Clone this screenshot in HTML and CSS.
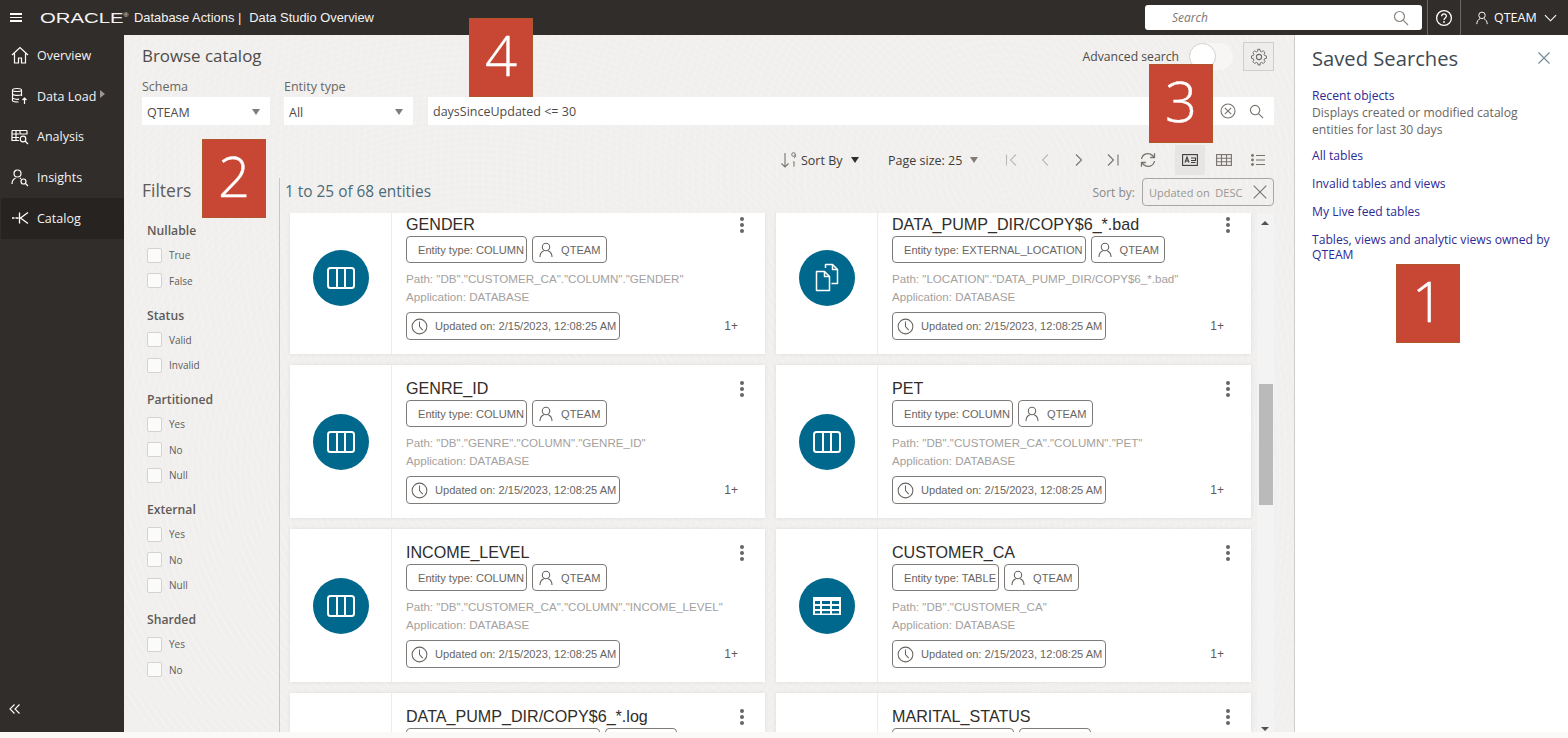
FILE: index.html
```html
<!DOCTYPE html>
<html lang="en">
<head>
  <meta charset="UTF-8" />
  <title>Data Studio Overview</title>
  <meta name="viewport" content="width=device-width, initial-scale=1.0" />
  <link rel="stylesheet" href="styles.css">
</head>
<body>

  <!-- shared icons -->
  <svg class="defs" width="0" height="0">
    <symbol id="i-person" viewBox="0 0 16 16"><g fill="none" stroke="currentColor" stroke-width="1.1"><circle cx="8" cy="5" r="3.7"/><path d="M2 15c0-3.4 2.2-5.6 3.8-6.3M14 15c0-3.4-2.2-5.6-3.8-6.3"/></g></symbol>
    <symbol id="i-clock" viewBox="0 0 18 18"><g fill="none" stroke="currentColor" stroke-width="1.1"><circle cx="9" cy="9" r="7.8"/><path d="M9 3.6V9l3.4 3.8"/></g></symbol>
    <symbol id="i-column" viewBox="0 0 30 24"><g fill="none" stroke="#fff" stroke-width="2"><rect x="2" y="2" width="26" height="20" rx="2.5"/><path d="M11 2v20M19 2v20"/></g></symbol>
    <symbol id="i-table" viewBox="0 0 28 18"><rect width="28" height="18" fill="#fff"/><g fill="#00688c"><rect x="2" y="4" width="5" height="3"/><rect x="9" y="4" width="8" height="3"/><rect x="19" y="4" width="7" height="3"/><rect x="2" y="9" width="5" height="3"/><rect x="9" y="9" width="8" height="3"/><rect x="19" y="9" width="7" height="3"/><rect x="2" y="14" width="5" height="2.500"/><rect x="9" y="14" width="8" height="2.500"/><rect x="19" y="14" width="7" height="2.500"/></g></symbol>
    <symbol id="i-files" viewBox="0 0 24 29"><g fill="none" stroke="#fff" stroke-width="1.500" stroke-linejoin="round"><path d="M1.500 8.500h8l5 5v14h-13z"/><path d="M9.500 8.500v5h5"/><path d="M10.500 5V1.500h7l5 5v14h-6"/><path d="M17.500 1.500v5h5"/></g></symbol>
    <symbol id="i-search" viewBox="0 0 16 16"><g fill="none" stroke="currentColor" stroke-width="1.200"><circle cx="6.500" cy="6.500" r="5"/><path d="M10.200 10.200L15 15"/></g></symbol>
  </svg>

  <header class="topbar">
    <div class="hamburger"><span></span><span></span><span></span></div>
    <span class="logo">ORACLE<sup>&reg;</sup></span>
    <span class="app-title">Database Actions |</span>
    <span class="app-title page-title">Data Studio Overview</span>
    <div class="top-search">
      <span>Search</span>
      <svg width="16" height="16"><use href="#i-search"/></svg>
    </div>
    <div class="top-btn help">
      <svg width="18" height="18" viewBox="0 0 18 18"><circle cx="9" cy="9" r="7.400" fill="none" stroke="#fff" stroke-width="1.300"/><path d="M6.700 7.200c0-3 4.700-3 4.700-.1 0 1.900-2.400 1.900-2.400 3.800" fill="none" stroke="#fff" stroke-width="1.300"/><circle cx="9" cy="13" r=".9" fill="#fff"/></svg>
    </div>
    <div class="top-btn user">
      <svg width="14" height="14"><use href="#i-person"/></svg>
      <span>QTEAM</span>
      <svg width="13" height="8" viewBox="0 0 14 8"><path d="M1 1l6 6 6-6" fill="none" stroke="#fff" stroke-width="1.200"/></svg>
    </div>
  </header>

  <div class="shell">
    <nav class="sidenav">
      <a class="nav-item">
        <svg width="18" height="18" viewBox="0 0 18 18"><path d="M1 9l8-7.500L17 9M3.500 7.500V17h4v-5h3v5h4V7.500" fill="none" stroke="#fff" stroke-width="1.200"/></svg>
        <span>Overview</span>
      </a>
      <a class="nav-item">
        <svg width="18" height="18" viewBox="0 0 18 18"><g fill="none" stroke="#fff" stroke-width="1.200"><path d="M1.500 3c0-2 9-2 9 0v6M1.500 3v10.500c0 1 2 1.500 6 1.500M1.500 3c0 2 9 2 9 0M1.500 6.800c0 1.700 6 2 9 1M1.500 10.500c0 1.500 4 2 6.500 1.700"/><path d="M13.500 17v-6M11.500 13l2-2 2 2"/></g></svg>
        <span>Data Load</span>
        <i class="nav-arrow"></i>
      </a>
      <a class="nav-item">
        <svg width="18" height="18" viewBox="0 0 18 18"><g fill="none" stroke="#fff" stroke-width="1.200"><path d="M1 2.500h15M1 2.500v10h7M1 6h7M1 9.500h7M5 2.500v10M9 2.500V6h7V2.500"/><circle cx="12" cy="11" r="2.800"/><path d="M14 13l3 3"/></g></svg>
        <span>Analysis</span>
      </a>
      <a class="nav-item">
        <svg width="18" height="18" viewBox="0 0 18 18"><g fill="none" stroke="#fff" stroke-width="1.200"><circle cx="6.500" cy="4.500" r="3.500"/><path d="M1 15c0-3 1.500-5 3.500-6M9 9l1 .8"/><circle cx="12.500" cy="12.500" r="2.500"/><path d="M14.500 14.500l2.500 2.500"/></g></svg>
        <span>Insights</span>
      </a>
      <a class="nav-item active">
        <svg width="18" height="18" viewBox="0 0 18 18"><g fill="none" stroke="#fff" stroke-width="1.300"><path d="M1 9h2.500M4.500 9h3M8.500 3.500v11M17 3.500L9.500 9l7.500 5.500"/></g></svg>
        <span>Catalog</span>
      </a>
      <svg class="collapse" width="11" height="10" viewBox="0 0 11 10"><path d="M5.500.5L1 5l4.500 4.500M10.500.5L6 5l4.500 4.500" fill="none" stroke="#fff" stroke-width="1.100"/></svg>
    </nav>

    <main class="main">
      <div class="head-row">
        <h1>Browse catalog</h1>
        <div class="advanced">
          <span>Advanced search</span>
          <div class="toggle"><i></i></div>
          <div class="gear">
            <svg width="18" height="18" viewBox="0 0 18 18"><g fill="none" stroke="#6f6b68" stroke-width="1.100"><circle cx="9" cy="9" r="2.600"/><path d="M7.600 1.500h2.800l.4 2.200 1.500.7 1.900-1.200 2 2-1.200 1.900.6 1.500 2.200.4v2.800l-2.200.4-.6 1.500 1.200 1.900-2 2-1.900-1.200-1.500.6-.4 2.200" transform="scale(.88) translate(.9 0)"/><path d="M7.600 1.500l-.4 2.200-1.500.7-1.900-1.200-2 2 1.200 1.900-.6 1.500-2.200.4v2.800l2.200.4.600 1.500-1.200 1.900 2 2 1.900-1.200 1.500.6.400 2.200h2.800" transform="scale(.88) translate(1.500 0)"/></g></svg>
          </div>
        </div>
      </div>

      <div class="form-row">
        <div class="field">
          <label>Schema</label>
          <div class="select">QTEAM<i class="caret"></i></div>
        </div>
        <div class="field">
          <label>Entity type</label>
          <div class="select">All<i class="caret"></i></div>
        </div>
        <div class="query">
          <span>daysSinceUpdated &lt;= 30</span>
          <svg class="query-clear" width="16" height="16" viewBox="0 0 16 16"><g fill="none" stroke="#77736f" stroke-width="1.100"><circle cx="8" cy="8" r="7"/><path d="M4.800 4.800l6.400 6.400M11.200 4.800l-6.400 6.400"/></g></svg>
          <svg class="query-search" width="15" height="15"><use href="#i-search"/></svg>
        </div>
      </div>

      <div class="toolbar">
        <div class="sort-by">
          <svg width="18" height="18" viewBox="0 0 18 18"><path d="M5 2v14M1.500 12.500L5 16l3.500-3.500" fill="none" stroke="#77736f" stroke-width="1.100"/><g fill="none" stroke="#77736f" stroke-width="1"><circle cx="13.500" cy="3.500" r="1.800"/><path d="M15.300 3.500v2.500l-1.300 1M13 11.500l1-.8v5"/></g></svg>
          <span>Sort By</span>
          <i class="caret dark"></i>
        </div>
        <div class="page-size">
          <span>Page size: 25</span>
          <i class="caret"></i>
        </div>
        <div class="pager">
          <svg width="14" height="14" viewBox="0 0 14 14"><path d="M2.500 1.500v11M12 1.500L6.500 7l5.500 5.500" fill="none" stroke="#bdbab7" stroke-width="1.100"/></svg>
          <svg width="14" height="14" viewBox="0 0 14 14"><path d="M10 1.500L4.500 7l5.500 5.500" fill="none" stroke="#bdbab7" stroke-width="1.100"/></svg>
          <svg width="14" height="14" viewBox="0 0 14 14"><path d="M4 1.500L9.500 7 4 12.500" fill="none" stroke="#77736f" stroke-width="1.100"/></svg>
          <svg width="14" height="14" viewBox="0 0 14 14"><path d="M2 1.500L7.500 7 2 12.500M12 1.500v11" fill="none" stroke="#77736f" stroke-width="1.100"/></svg>
          <svg width="16" height="16" viewBox="0 0 16 16"><g fill="none" stroke="#77736f" stroke-width="1.300"><path d="M1.500 7a6.500 6.500 0 0 1 11-3.500l1.500 1.700M14.500 9a6.500 6.500 0 0 1-11 3.500L2 10.800"/><path d="M14.500 1.200v4.300h-4.300M1.500 14.800v-4.300h4.300"/></g></svg>
        </div>
        <div class="views">
          <div class="view on">
            <svg width="16" height="12" viewBox="0 0 16 12"><g fill="none" stroke="#3f3b38" stroke-width="1.100"><rect x=".6" y=".6" width="14.800" height="10.800"/><path d="M3 8.500L5 3l2 5.500M3.800 7h2.400M9 4h4.500v2.500H9M9 8.500h4.500"/></g></svg>
          </div>
          <div class="view">
            <svg width="16" height="12" viewBox="0 0 16 12"><g fill="none" stroke="#77736f" stroke-width="1.100"><rect x=".6" y=".6" width="14.800" height="10.800"/><path d="M.6 4.200h14.800M.6 7.800h14.800M5.500.6v10.800M10.500.6v10.800"/></g></svg>
          </div>
          <div class="view">
            <svg width="14" height="12" viewBox="0 0 14 12"><g fill="#77736f"><circle cx="1.500" cy="1.500" r="1.400"/><circle cx="1.500" cy="6" r="1.400"/><circle cx="1.500" cy="10.500" r="1.400"/><rect x="5" y="1" width="9" height="1"/><rect x="5" y="5.500" width="9" height="1"/><rect x="5" y="10" width="9" height="1"/></g></svg>
          </div>
        </div>
      </div>

      <div class="results">
        <aside class="filters">
          <h2>Filters</h2>
          <div class="filter-group">
            <h3>Nullable</h3>
            <label class="check"><i></i>True</label>
            <label class="check"><i></i>False</label>
          </div>
          <div class="filter-group">
            <h3>Status</h3>
            <label class="check"><i></i>Valid</label>
            <label class="check"><i></i>Invalid</label>
          </div>
          <div class="filter-group">
            <h3>Partitioned</h3>
            <label class="check"><i></i>Yes</label>
            <label class="check"><i></i>No</label>
            <label class="check"><i></i>Null</label>
          </div>
          <div class="filter-group">
            <h3>External</h3>
            <label class="check"><i></i>Yes</label>
            <label class="check"><i></i>No</label>
            <label class="check"><i></i>Null</label>
          </div>
          <div class="filter-group">
            <h3>Sharded</h3>
            <label class="check"><i></i>Yes</label>
            <label class="check"><i></i>No</label>
          </div>
        </aside>

        <section class="listing">
          <div class="listing-head">
            <span class="count">1 to 25 of 68 entities</span>
            <div class="sorted">
              <span class="sorted-label">Sort by:</span>
              <div class="sorted-chip">
                <span>Updated on&nbsp; DESC</span>
                <svg width="14" height="14" viewBox="0 0 14 14"><path d="M.7.700l12.600 12.600M13.300.700L.7 13.300" fill="none" stroke="#77736f" stroke-width="1.100"/></svg>
              </div>
            </div>
          </div>

          <div class="list-wrap">
            <div class="cards">

              <article class="card">
                <div class="card-icon"><span class="disc"><svg width="30" height="24"><use href="#i-column"/></svg></span></div>
                <div class="card-body">
                  <div class="card-name">GENDER</div>
                  <div class="chips"><span class="chip type">Entity type: COLUMN</span><span class="chip owner"><svg width="16" height="16"><use href="#i-person"/></svg>QTEAM</span></div>
                  <div class="meta">Path: "DB"."CUSTOMER_CA"."COLUMN"."GENDER"</div>
                  <div class="meta">Application: DATABASE</div>
                  <div class="chip updated"><svg width="17" height="17"><use href="#i-clock"/></svg>Updated on: 2/15/2023, 12:08:25 AM</div>
                </div>
                <span class="kebab"><i></i><i></i><i></i></span>
                <span class="more">1+</span>
              </article>

              <article class="card">
                <div class="card-icon"><span class="disc"><svg width="24" height="29"><use href="#i-files"/></svg></span></div>
                <div class="card-body">
                  <div class="card-name">DATA_PUMP_DIR/COPY$6_*.bad</div>
                  <div class="chips"><span class="chip type">Entity type: EXTERNAL_LOCATION</span><span class="chip owner"><svg width="16" height="16"><use href="#i-person"/></svg>QTEAM</span></div>
                  <div class="meta">Path: "LOCATION"."DATA_PUMP_DIR/COPY$6_*.bad"</div>
                  <div class="meta">Application: DATABASE</div>
                  <div class="chip updated"><svg width="17" height="17"><use href="#i-clock"/></svg>Updated on: 2/15/2023, 12:08:25 AM</div>
                </div>
                <span class="kebab"><i></i><i></i><i></i></span>
                <span class="more">1+</span>
              </article>

              <article class="card">
                <div class="card-icon"><span class="disc"><svg width="30" height="24"><use href="#i-column"/></svg></span></div>
                <div class="card-body">
                  <div class="card-name">GENRE_ID</div>
                  <div class="chips"><span class="chip type">Entity type: COLUMN</span><span class="chip owner"><svg width="16" height="16"><use href="#i-person"/></svg>QTEAM</span></div>
                  <div class="meta">Path: "DB"."GENRE"."COLUMN"."GENRE_ID"</div>
                  <div class="meta">Application: DATABASE</div>
                  <div class="chip updated"><svg width="17" height="17"><use href="#i-clock"/></svg>Updated on: 2/15/2023, 12:08:25 AM</div>
                </div>
                <span class="kebab"><i></i><i></i><i></i></span>
                <span class="more">1+</span>
              </article>

              <article class="card">
                <div class="card-icon"><span class="disc"><svg width="30" height="24"><use href="#i-column"/></svg></span></div>
                <div class="card-body">
                  <div class="card-name">PET</div>
                  <div class="chips"><span class="chip type">Entity type: COLUMN</span><span class="chip owner"><svg width="16" height="16"><use href="#i-person"/></svg>QTEAM</span></div>
                  <div class="meta">Path: "DB"."CUSTOMER_CA"."COLUMN"."PET"</div>
                  <div class="meta">Application: DATABASE</div>
                  <div class="chip updated"><svg width="17" height="17"><use href="#i-clock"/></svg>Updated on: 2/15/2023, 12:08:25 AM</div>
                </div>
                <span class="kebab"><i></i><i></i><i></i></span>
                <span class="more">1+</span>
              </article>

              <article class="card">
                <div class="card-icon"><span class="disc"><svg width="30" height="24"><use href="#i-column"/></svg></span></div>
                <div class="card-body">
                  <div class="card-name">INCOME_LEVEL</div>
                  <div class="chips"><span class="chip type">Entity type: COLUMN</span><span class="chip owner"><svg width="16" height="16"><use href="#i-person"/></svg>QTEAM</span></div>
                  <div class="meta">Path: "DB"."CUSTOMER_CA"."COLUMN"."INCOME_LEVEL"</div>
                  <div class="meta">Application: DATABASE</div>
                  <div class="chip updated"><svg width="17" height="17"><use href="#i-clock"/></svg>Updated on: 2/15/2023, 12:08:25 AM</div>
                </div>
                <span class="kebab"><i></i><i></i><i></i></span>
                <span class="more">1+</span>
              </article>

              <article class="card">
                <div class="card-icon"><span class="disc"><svg width="28" height="18"><use href="#i-table"/></svg></span></div>
                <div class="card-body">
                  <div class="card-name">CUSTOMER_CA</div>
                  <div class="chips"><span class="chip type">Entity type: TABLE</span><span class="chip owner"><svg width="16" height="16"><use href="#i-person"/></svg>QTEAM</span></div>
                  <div class="meta">Path: "DB"."CUSTOMER_CA"</div>
                  <div class="meta">Application: DATABASE</div>
                  <div class="chip updated"><svg width="17" height="17"><use href="#i-clock"/></svg>Updated on: 2/15/2023, 12:08:25 AM</div>
                </div>
                <span class="kebab"><i></i><i></i><i></i></span>
                <span class="more">1+</span>
              </article>

              <!-- last row is cut by the page end: only the chip tops show -->
              <article class="card">
                <div class="card-icon"></div>
                <div class="card-body">
                  <div class="card-name">DATA_PUMP_DIR/COPY$6_*.log</div>
                  <div class="chips"><span class="chip stub wide"></span><span class="chip stub"></span></div>
                </div>
                <span class="kebab"><i></i><i></i><i></i></span>
              </article>

              <article class="card">
                <div class="card-icon"></div>
                <div class="card-body">
                  <div class="card-name">MARITAL_STATUS</div>
                  <div class="chips"><span class="chip stub mid"></span><span class="chip stub"></span></div>
                </div>
                <span class="kebab"><i></i><i></i><i></i></span>
              </article>

            </div>
            <div class="scrollbar">
              <i class="arrow up"></i>
              <div class="thumb"></div>
              <i class="arrow down"></i>
            </div>
          </div>
        </section>
      </div>
    </main>

    <aside class="saved">
      <div class="saved-head">
        <h2>Saved Searches</h2>
        <svg width="12" height="12" viewBox="0 0 12 12"><path d="M.5.500l11 11M11.500.500l-11 11" fill="none" stroke="#6f8a96" stroke-width="1.100"/></svg>
      </div>
      <div class="saved-item first">
        <a>Recent objects</a>
        <p>Displays created or modified catalog entities for last 30 days</p>
      </div>
      <div class="saved-item"><a>All tables</a></div>
      <div class="saved-item"><a>Invalid tables and views</a></div>
      <div class="saved-item"><a>My Live feed tables</a></div>
      <div class="saved-item tight"><a>Tables, views and analytic views owned by QTEAM</a></div>
    </aside>
  </div>

  <!-- numbered callouts laid over the screenshot -->
  <div class="callout c1">1</div>
  <div class="callout c2">2</div>
  <div class="callout c3">3</div>
  <div class="callout c4">4</div>

</body>
</html>
```

FILE: styles.css
```css
* {
  box-sizing: border-box;
}

body {
  margin: 0;
  height: 738px;
  overflow: hidden;
  position: relative;
  background: #fbf9f8;
  font-family: "Open Sans", "Noto Sans", sans-serif;
  color: #312d2a;
}

.defs {
  position: absolute;
}

h1, h2, h3, p {
  margin: 0;
  font-weight: 400;
}

/* top bar */
.topbar {
  height: 35px;
  background: #312d2a;
  color: #fff;
  display: flex;
  align-items: center;
}

.hamburger {
  width: 12px;
  margin-left: 10px;
  margin-right: 18px;
  display: flex;
  flex-direction: column;
  gap: 2px;
}

.hamburger span {
  height: 1.500px;
  background: #fff;
}

.logo {
  font-family: "Liberation Sans", sans-serif;
  font-size: 15.500px;
  line-height: 15px;
  width: 94px;
  flex: none;
  color: #f4f3f2;
  display: inline-block;
  transform: scaleX(1.310);
  transform-origin: left center;
}

.logo sup {
  font-size: 5px;
  vertical-align: 6px;
  line-height: 0;
}

.app-title {
  font-family: "Liberation Sans", sans-serif;
  font-size: 12.900px;
  color: #f4f3f2;
}

.page-title {
  margin-left: 8px;
}

.top-search {
  margin-left: auto;
  width: 277px;
  height: 25px;
  background: #fff;
  border-radius: 3px;
  display: flex;
  align-items: center;
  justify-content: space-between;
  padding: 0 13px 0 27px;
  color: #7c7774;
  font-size: 12px;
  font-style: italic;
}

.top-search svg {
  color: #8b8784;
}

.top-btn {
  height: 35px;
  display: flex;
  align-items: center;
  border-left: 1px solid #6c6865;
}

.help {
  margin-left: 5px;
  width: 33px;
  justify-content: center;
}

.user {
  width: 108px;
  padding-left: 14px;
  gap: 5px;
  font-size: 12.500px;
}

.user span {
  margin-right: 2px;
}

/* left nav */
.shell {
  display: flex;
  height: 697px;
}

.sidenav {
  width: 124px;
  flex: none;
  background: #312d2a;
  display: flex;
  flex-direction: column;
  position: relative;
}

.nav-item {
  height: 40.750px;
  padding-left: 11px;
  display: flex;
  align-items: center;
  gap: 8px;
  color: #f4f3f2;
  font-size: 12.500px;
}

.nav-item.active {
  background: #262320;
  margin-left: 1px;
  padding-left: 10px;
}

.nav-arrow {
  width: 0;
  height: 0;
  margin-left: -4px;
  margin-top: -4px;
  border-left: 5px solid #9a9693;
  border-top: 4px solid transparent;
  border-bottom: 4px solid transparent;
}

.collapse {
  position: absolute;
  left: 9px;
  bottom: 18px;
}

/* main area */
.main {
  flex: 1;
  min-width: 0;
  padding: 0 20px 0 18px;
  display: flex;
  flex-direction: column;
  background-color: #f0efed;
  background-image:
    repeating-radial-gradient(circle at 30% 62%, rgba(255,255,255,.14) 0 1px, rgba(255,255,255,0) 2px 6px),
    repeating-radial-gradient(circle at 75% 20%, rgba(255,255,255,.12) 0 1px, rgba(255,255,255,0) 2px 7px);
}

.head-row {
  height: 37px;
  padding-top: 6px;
  display: flex;
  justify-content: space-between;
  align-items: center;
}

.head-row h1 {
  font-size: 16.900px;
  color: #4f4b48;
  margin-top: -3px;
}

.advanced {
  display: flex;
  align-items: center;
  font-size: 12.200px;
  color: #4f4b48;
}

.toggle {
  width: 44px;
  height: 27px;
  margin-left: 10px;
  background: #f7f6f5;
  border-radius: 14px;
}

.toggle i {
  display: block;
  width: 27px;
  height: 27px;
  background: #fff;
  border: 1px solid #d2cfcc;
  border-radius: 50%;
}

.gear {
  width: 31px;
  height: 29px;
  margin-left: 10px;
  border: 1px solid #d0cdca;
  background: #eeedeb;
  display: flex;
  align-items: center;
  justify-content: center;
}

.form-row {
  display: flex;
  align-items: flex-end;
  gap: 14px;
  margin-top: 5px;
}

.field {
  width: 129px;
}

.field:first-child {
  width: 128px;
}

.field label {
  display: block;
  font-size: 12.500px;
  line-height: 20px;
  color: #6a6662;
}

.select {
  height: 28px;
  background: #fff;
  padding-left: 5px;
  font-size: 12.500px;
  line-height: 31px;
  color: #4f4b48;
  position: relative;
}

.caret {
  display: inline-block;
  width: 0;
  height: 0;
  border-left: 4.500px solid transparent;
  border-right: 4.500px solid transparent;
  border-top: 6px solid #807c78;
}

.caret.dark {
  border-top-color: #312d2a;
}

.select .caret {
  position: absolute;
  right: 10px;
  top: 12px;
}

.query {
  flex: 1;
  margin-left: 1px;
  height: 28px;
  background: #fff;
  padding: 0 10px 0 5px;
  display: flex;
  align-items: center;
  font-size: 12.500px;
  color: #4f4b48;
}

.query span {
  flex: 1;
}

.query-search {
  margin-left: 13px;
  color: #77736f;
}

.toolbar {
  height: 40px;
  margin-top: 15px;
  display: flex;
  align-items: center;
  font-size: 12.500px;
  color: #3f3b38;
  white-space: nowrap;
}

.toolbar > div {
  flex: none;
}

.sort-by {
  margin-left: 638px;
  display: flex;
  align-items: center;
  gap: 3px;
  width: 108px;
}

.sort-by .caret {
  margin-left: 5px;
}

.page-size {
  width: 90px;
  display: flex;
  align-items: center;
  justify-content: space-between;
}

.pager {
  margin-left: 26px;
  width: 167px;
  display: flex;
  align-items: center;
  gap: 20px;
}

.views {
  display: flex;
  align-items: center;
  gap: 4px;
  margin-left: 4px;
}

.view {
  width: 30px;
  height: 30px;
  display: flex;
  align-items: center;
  justify-content: center;
}

.view.on {
  background: #e6e5e3;
}

/* filters + listing */
.results {
  flex: 1;
  min-height: 0;
  display: flex;
  margin-top: -2px;
}

.filters {
  width: 138px;
  flex: none;
  border-right: 1px solid #c9c6c3;
}

.filters h2 {
  font-size: 17.500px;
  line-height: 24px;
  color: #5f5b58;
}

.filter-group {
  padding-left: 5px;
  margin-top: 13px;
}

.filters h2 + .filter-group {
  margin-top: 20px;
}

.filter-group h3 {
  font-size: 12.200px;
  line-height: 18px;
  font-weight: 600;
  color: #5f5b58;
  margin-bottom: 2.500px;
}

.check {
  display: flex;
  align-items: center;
  height: 25.500px;
  font-size: 10px;
  color: #5f5b58;
}

.check i {
  width: 15px;
  height: 15px;
  margin-right: 7px;
  background: #fbfbfa;
  border: 1px solid #d5d2cf;
  border-radius: 2px;
}

.listing {
  flex: 1;
  min-width: 0;
  display: flex;
  flex-direction: column;
}

.listing-head {
  height: 35px;
  padding-left: 5px;
  display: flex;
  justify-content: space-between;
}

.count {
  font-size: 15.400px;
  line-height: 28px;
  color: #4b6b78;
}

.sorted {
  display: flex;
  align-items: flex-start;
  gap: 7px;
  font-size: 12px;
  color: #8b8784;
}

.sorted-label {
  line-height: 30px;
}

.sorted-chip {
  width: 132px;
  height: 28px;
  border: 1px solid #a9a6a3;
  border-radius: 4px;
  padding: 0 6px;
  display: flex;
  align-items: center;
  justify-content: space-between;
  font-size: 11px;
  color: #9a9693;
  white-space: nowrap;
}

/* card list, clipped where the page ends */
.list-wrap {
  flex: 1;
  min-height: 0;
  overflow: hidden;
  display: flex;
  padding-left: 10px;
}

.cards {
  width: 961px;
  flex: none;
  margin-top: -12px;
  display: grid;
  grid-template-columns: 475px 475px;
  grid-auto-rows: 153px;
  gap: 11px;
  align-content: start;
}

.card {
  position: relative;
  background: #fff;
  display: flex;
  box-shadow: 0 0 4px rgba(0,0,0,.08);
  font-family: "Liberation Sans", sans-serif;
}

.card-icon {
  width: 102px;
  flex: none;
  border-right: 1px solid #ececec;
  display: flex;
  align-items: center;
  justify-content: center;
}

.disc {
  width: 56px;
  height: 56px;
  border-radius: 50%;
  background: #00688c;
  display: flex;
  align-items: center;
  justify-content: center;
}

.card-body {
  padding: 12px 0 0 14px;
  min-width: 0;
}

.card-name {
  font-size: 16.100px;
  line-height: 22px;
  color: #312d2a;
  white-space: nowrap;
}

.chips {
  display: flex;
  gap: 5px;
  margin-top: 1px;
  margin-bottom: 7px;
}

.chip {
  height: 27px;
  border: 1px solid #7f7b78;
  border-radius: 4px;
  display: inline-flex;
  align-items: center;
  font-size: 11.100px;
  color: #696561;
  white-space: nowrap;
}

.chip.type {
  padding: 0 2px 0 11px;
}

.chip.owner {
  padding: 0 5px 0 5px;
  gap: 7px;
}

.chip.stub {
  width: 72px;
}

.chip.stub.mid {
  width: 122px;
}

.chip.stub.wide {
  width: 194px;
}

.meta {
  font-size: 11.600px;
  line-height: 18px;
  color: #a4a19e;
  white-space: nowrap;
}

.chip.updated {
  height: 28px;
  margin-top: 6px;
  padding: 0 3px 0 4px;
  gap: 7px;
}

.kebab {
  position: absolute;
  top: 16px;
  right: 21px;
  display: flex;
  flex-direction: column;
  gap: 2px;
}

.kebab i {
  width: 4px;
  height: 4px;
  border-radius: 50%;
  background: #696561;
}

.more {
  position: absolute;
  right: 27px;
  top: 118px;
  font-size: 12px;
  color: #5f5b58;
}

.scrollbar {
  width: 17px;
  margin-left: 6px;
  background: #f3f3f3;
  position: relative;
}

.thumb {
  position: absolute;
  top: 171px;
  left: 2px;
  width: 14px;
  height: 121px;
  background: #bababa;
}

.arrow {
  position: absolute;
  left: 4px;
  width: 0;
  height: 0;
  border-left: 4px solid transparent;
  border-right: 4px solid transparent;
}

.arrow.up {
  top: 8px;
  border-bottom: 4px solid #505050;
}

.arrow.down {
  bottom: 1px;
  border-top: 4px solid #505050;
}

/* saved searches panel */
.saved {
  width: 274px;
  flex: none;
  background: #fff;
  border-left: 1px solid #cfcdca;
  padding: 0 17px 0 17px;
  font-size: 12.150px;
}

.saved-head {
  height: 46px;
  display: flex;
  align-items: center;
  justify-content: space-between;
  padding-right: 1px;
}

.saved-head h2 {
  font-size: 20.200px;
  color: #3f4a52;
}

.saved-item {
  margin-bottom: 11px;
  line-height: 17px;
}

.saved-item.first {
  margin-top: 6px;
  margin-bottom: 9px;
}

.saved-item.tight {
  margin-top: 12px;
  line-height: 15px;
}

.saved-item a {
  color: #2e2a94;
}

.saved-item p {
  color: #6a6662;
}

/* numbered callouts */
.callout {
  position: absolute;
  width: 64px;
  height: 79px;
  background: #c74634;
  border: 1px solid #b0562d;
  color: #fff;
  font-size: 56px;
  font-weight: 300;
  line-height: 70px;
  text-align: center;
  -webkit-text-stroke: .4px #fff;
}

.c1 { left: 1396px; top: 264px; }
.c2 { left: 202px; top: 139px; }
.c3 { left: 1149px; top: 64px; }
.c4 { left: 469px; top: 18px; }
```
